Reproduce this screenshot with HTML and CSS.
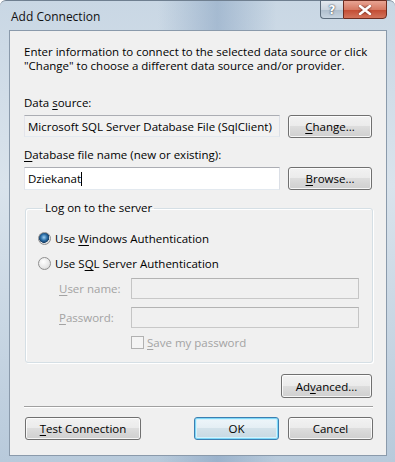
FILE: index.html
```html
<!DOCTYPE html>
<html lang="en">
<head>
  <meta charset="UTF-8"/>
  <title>Add Connection</title>
  <link rel="stylesheet" href="styles.css">
</head>
<body>
  <div class="window">
    <div class="titlebar">
      <span class="title">Add Connection</span>
      <div class="caption-buttons">
        <button class="cap help">?</button>
        <button class="cap close">
          <svg width="14" height="10" viewBox="0 0 14 10">
            <path d="M2 1 L12 9 M12 1 L2 9" stroke="#fff" stroke-width="2.6" stroke-linecap="round"/>
          </svg>
        </button>
      </div>
    </div>

    <div class="client">
      <p class="intro">Enter information to connect to the selected data source or click<br>"Change" to choose a different data source and/or provider.</p>

      <div class="field-label">Data <u>s</u>ource:</div>
      <div class="field-row">
        <div class="textbox readonly">Microsoft SQL Server Database File (SqlClient)</div>
        <button class="btn side"><u>C</u>hange...</button>
      </div>

      <div class="field-label second"><u>D</u>atabase file name (new or existing):</div>
      <div class="field-row tight">
        <div class="textbox editable">Dziekanat<span class="caret"></span></div>
        <button class="btn side"><u>B</u>rowse...</button>
      </div>

      <fieldset class="group">
        <legend>Log on to the server</legend>
        <div class="option first">
          <span class="radio checked"></span>
          <span>Use <u>W</u>indows Authentication</span>
        </div>
        <div class="option">
          <span class="radio"></span>
          <span>Use S<u>Q</u>L Server Authentication</span>
        </div>
        <div class="cred-row first">
          <span class="cred-label"><u>U</u>ser name:</span>
          <span class="textbox disabled"></span>
        </div>
        <div class="cred-row">
          <span class="cred-label"><u>P</u>assword:</span>
          <span class="textbox disabled"></span>
        </div>
        <div class="check-row">
          <span class="checkbox"></span>
          <span><u>S</u>ave my password</span>
        </div>
      </fieldset>

      <div class="advanced-row">
        <button class="btn advanced">Ad<u>v</u>anced...</button>
      </div>

      <div class="separator"></div>

      <div class="footer-row">
        <button class="btn test"><u>T</u>est Connection</button>
        <button class="btn ok">OK</button>
        <button class="btn cancel">Cancel</button>
      </div>
    </div>
  </div>
</body>
</html>
```

FILE: styles.css
```css
:root {
  --dialog-bg: #f0f0f0;
  --text-color: #000;
  --disabled-text: #a3a3a3;
  --btn-border: #707070;
  --field-border: #abadb3;
}

* {
  box-sizing: border-box;
}

body {
  margin: 0;
  background: #fff;
  font-family: "Open Sans", "Noto Sans", sans-serif;
  font-size: 11.5px;
  color: var(--text-color);
}

u {
  text-decoration-thickness: 1px;
  text-underline-offset: 2px;
}

/* window frame */

.window {
  width: 395px;
  height: 462px;
  display: flex;
  flex-direction: column;
  border-radius: 6px 6px 0 0;
  background:
    linear-gradient(90deg, rgba(255,255,255,0) 40%, rgba(120,150,185,0.45) 55%, rgba(255,255,255,0) 70%),
    linear-gradient(180deg, #c9d7e4 0%, #d9e3ec 40%, #b8cadb 100%);
  border-top: 1px solid #6f7f90;
}

.titlebar {
  height: 29px;
  display: flex;
  align-items: center;
  padding: 2px 8px 0 11px;
}

.title {
  font-size: 12px;
  color: #111;
  flex: 1;
}

.caption-buttons {
  align-self: flex-start;
  margin-top: -3px;
  display: flex;
}

.cap {
  height: 19px;
  border: 1px solid #5d6c7c;
  padding: 0;
  display: flex;
  align-items: center;
  justify-content: center;
}

.help {
  width: 23px;
  border-radius: 0 0 0 4px;
  border-right: none;
  background: linear-gradient(180deg, #e3e9ef 0%, #cbd5df 50%, #aebdcc 51%, #c8d4e0 100%);
  color: #fff;
  font-family: "DejaVu Sans", sans-serif;
  font-weight: bold;
  font-size: 12px;
  text-shadow: 0 0 2px #3d4c5c, 0 0 1px #3d4c5c;
}

.close {
  width: 44px;
  border-radius: 0 0 4px 0;
  background: linear-gradient(180deg, #e8a493 0%, #d67963 50%, #c24a31 51%, #d2735b 100%);
  border-color: #6d2c20;
}

.close svg path {
  filter: drop-shadow(0 0 1px #5a1a10);
}

/* client area */

.client {
  height: 426px;
  margin: 0 8px 0 9px;
  background: var(--dialog-bg);
  border: 1px solid #8a9aab;
  padding: 0 13px 0 14px;
  display: flex;
  flex-direction: column;
}

.intro {
  margin: 14px 0 0;
  line-height: 14px;
}

.field-label {
  margin-top: 23px;
  line-height: 14px;
}

.field-label.second {
  margin-top: 10px;
}

.field-row {
  margin-top: 5px;
  display: flex;
  gap: 8px;
  height: 23px;
}

.textbox {
  height: 22px;
  border: 1px solid var(--field-border);
  border-color: #abadb3 #dbdfe6 #e3e9ef #e2e3ea;
  display: flex;
  align-items: center;
  padding-left: 3px;
}

.field-row .textbox {
  width: 256px;
}

.textbox.readonly {
  background: #f2f2f2;
}

.textbox.editable {
  background: #fff;
  height: 23px;
}

.caret {
  display: inline-block;
  width: 1px;
  height: 14px;
  background: #000;
}

.textbox.disabled {
  width: 228px;
  height: 21px;
  background: #f0f0f0;
  border: 1px solid #afafaf;
  border-color: #b3b3b3 #c5c5c5 #c8c8c8 #c5c5c5;
}

/* buttons */

.btn {
  font: inherit;
  color: var(--text-color);
  height: 23px;
  padding: 0;
  border: 1px solid var(--btn-border);
  border-radius: 3px;
  background: linear-gradient(180deg, #f2f2f2 0%, #ebebeb 48%, #dddddd 50%, #cfcfcf 100%);
  box-shadow: inset 0 0 0 1px rgba(255,255,255,0.8);
}

.btn.side {
  width: 84px;
}

.btn.advanced {
  width: 91px;
  height: 24px;
}

.btn.test {
  width: 116px;
}

.btn.ok {
  width: 85px;
  margin-left: auto;
  border-color: #3c7fb1;
  box-shadow: inset 0 0 0 1px #7fd8f8, inset 0 0 0 2px #d4f2fc;
  background: linear-gradient(180deg, #eef6fa 0%, #e4eef4 48%, #d3e2ea 50%, #c6d8e2 100%);
}

.btn.cancel {
  width: 85px;
  margin-left: 9px;
}

/* group box */

.group {
  margin: 11px 0 0 1px;
  padding: 0 13px 13px 12px;
  border: 1px solid #d5dfe5;
  border-radius: 3px;
  box-shadow: inset 1px 1px 0 #fff, 1px 1px 0 #fff;
  min-width: 0;
}

.group legend {
  padding: 0 2px;
  margin-left: 5px;
  line-height: 14px;
}

.option {
  margin-top: 9px;
  height: 16px;
  display: flex;
  align-items: center;
  gap: 4px;
}

.option.first {
  margin-top: 15px;
}

.radio {
  width: 13px;
  height: 13px;
  border-radius: 50%;
  border: 1px solid #8f8f8f;
  background: radial-gradient(circle at 40% 35%, #ffffff 0%, #e6e6e6 60%, #c9c9c9 100%);
  display: inline-block;
}

.radio.checked {
  background:
    radial-gradient(circle at 45% 40%, #9ed0f3 0%, #2c6fa8 35%, #173f66 58%, transparent 62%),
    radial-gradient(circle at 40% 35%, #ffffff 0%, #e6e6e6 60%, #c9c9c9 100%);
}

.cred-row {
  margin-top: 8px;
  padding-left: 21px;
  display: flex;
  align-items: center;
  color: var(--disabled-text);
}

.cred-row.first {
  margin-top: 7px;
}

.cred-label {
  width: 72px;
}

.check-row {
  margin-top: 7px;
  padding-left: 93px;
  height: 14px;
  display: flex;
  align-items: center;
  gap: 3px;
  color: var(--disabled-text);
}

.checkbox {
  width: 13px;
  height: 13px;
  border: 1px solid #b1b1b1;
  background: #f4f4f4;
}

.advanced-row {
  margin-top: 11px;
  display: flex;
  justify-content: flex-end;
  padding-right: 1px;
}

.separator {
  margin-top: 8px;
  height: 2px;
  border-top: 1px solid #a0a0a0;
  border-bottom: 1px solid #fff;
}

.footer-row {
  margin-top: 9px;
  display: flex;
  padding-left: 1px;
}
```
